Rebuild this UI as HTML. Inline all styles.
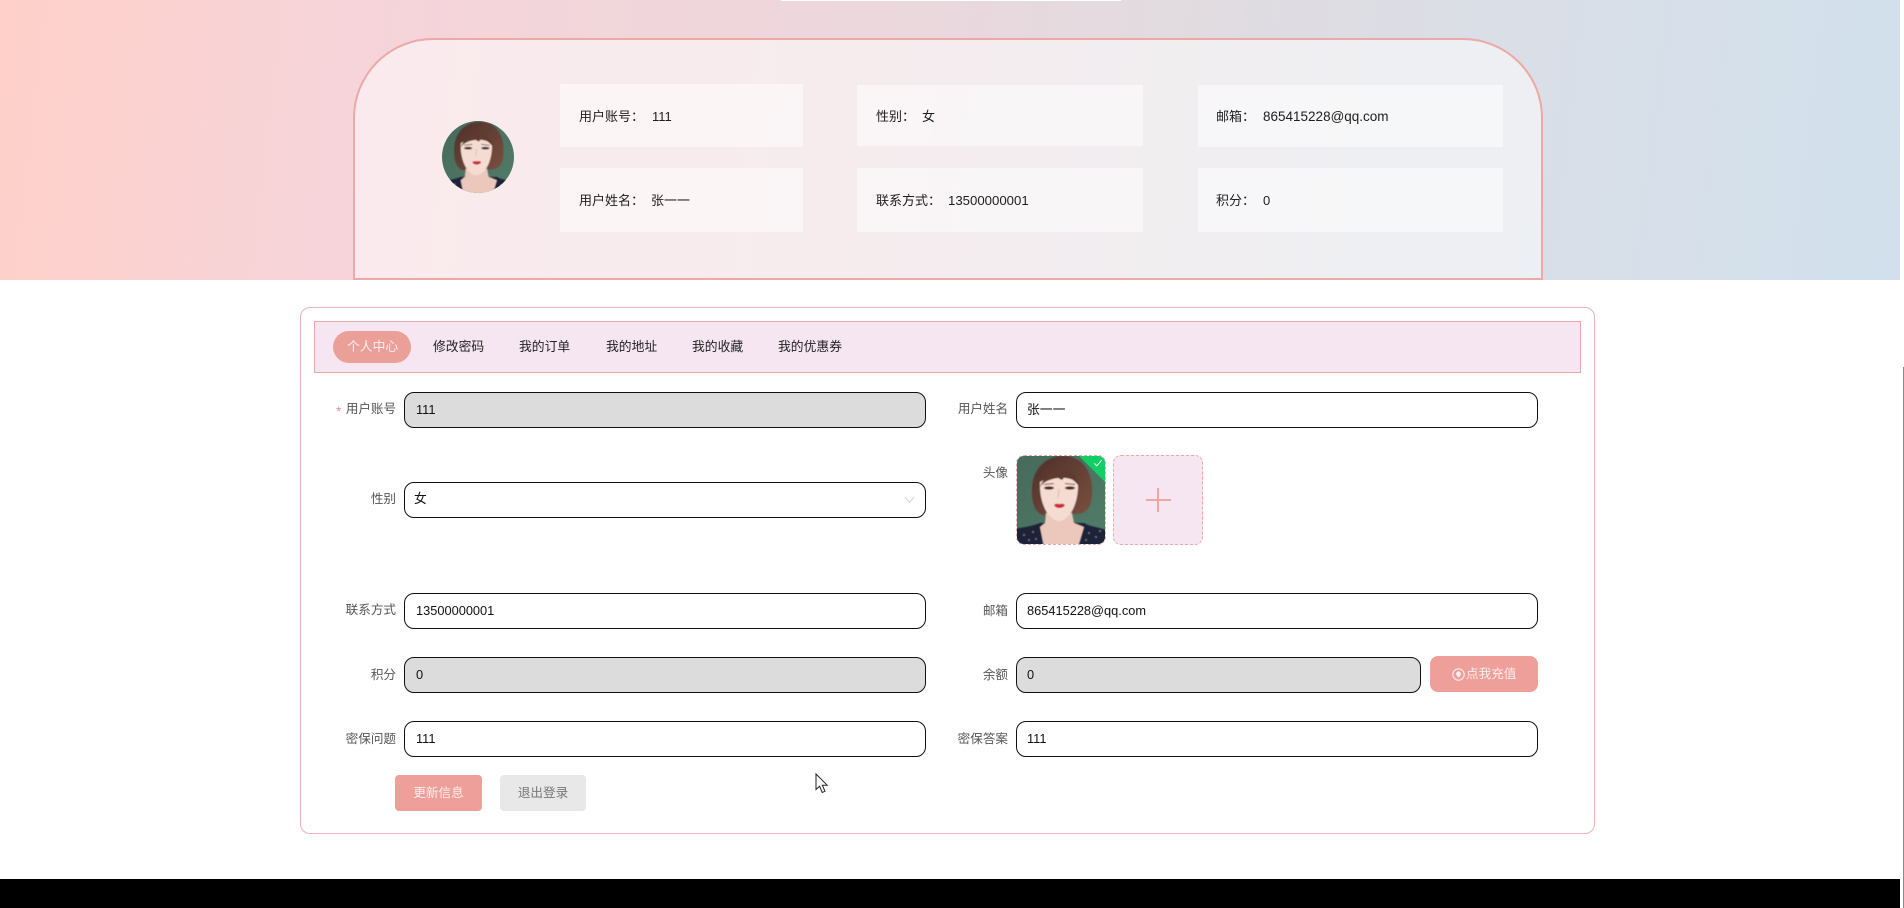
<!DOCTYPE html>
<html lang="zh">
<head>
<meta charset="utf-8">
<title>个人中心</title>
<style>
*{box-sizing:border-box}
html,body{margin:0;padding:0;width:1904px;height:908px;overflow:hidden;background:#fff;font-family:"Liberation Sans","Noto Sans CJK SC",sans-serif}
.a{position:absolute}
#hero{left:0;top:0;width:1900px;height:280px;background:linear-gradient(97deg,#ffd0c9 0%,#f6d4d9 18%,#ecd7dc 45%,#dfdce1 65%,#d7dfe9 85%,#d1e0ec 100%)}
#panel{left:353px;top:38px;width:1190px;height:242px;border:2px solid #eca9a5;border-radius:80px 80px 0 0;background:rgba(255,255,255,.52)}
.card{position:absolute;background:rgba(255,255,255,.48);height:63px}
.t{position:absolute;font-size:13px;line-height:20px;color:#1d1d1d;white-space:nowrap}
.lb{position:absolute;font-size:12.6px;line-height:20px;color:#555;text-align:right;white-space:nowrap}
.ip{position:absolute;height:36px;border:1px solid #111;border-radius:10px;background:#fff;font-size:12.8px;line-height:34px;padding-left:11px;color:#111;white-space:nowrap}
.ip.d{background:#dcdcdc}
.tab{position:absolute;top:337px;font-size:12.8px;line-height:20px;color:#222;white-space:nowrap}
.btn{position:absolute;height:36px;border-radius:4px;font-size:12.6px;line-height:36px;text-align:center}
</style>
</head>
<body>
<div id="hero" class="a"></div>
<div class="a" style="left:781px;top:0;width:340px;height:1px;background:#fff"></div>
<div id="panel" class="a"></div>

<svg width="0" height="0" style="position:absolute">
<defs>
<filter id="b" x="-5%" y="-5%" width="110%" height="110%"><feGaussianBlur stdDeviation=".65"/></filter>
<linearGradient id="bg" x1="0" y1="0" x2="1" y2="1"><stop offset="0" stop-color="#466a5b"/><stop offset="1" stop-color="#527c6a"/></linearGradient>
<linearGradient id="hr" x1="0" y1="0" x2="1" y2="1"><stop offset="0" stop-color="#4e2f28"/><stop offset="1" stop-color="#7a5040"/></linearGradient>
<symbol id="p" viewBox="0 0 90 90">
<rect width="90" height="90" fill="url(#bg)"/>
<g filter="url(#b)">
<path d="M16 38C15 14 30 1 47 1C66 1 77 16 76 38C76 50 72 58 62 59L27 60C20 58 16 50 16 38Z" fill="url(#hr)"/>
<path d="M-2 92L-2 74C8 72 14 72 24 68L68 68C74 72 84 72 92 76L92 92Z" fill="#1c2238"/>
<path d="M30 58L29 68L24 72L28 92L62 92L68 72L58 68L56 58Z" fill="#ecc8bc"/>
<path d="M24 27C23 46 31 65 43 66C55 65 63 46 62 27C52 21 33 21 24 27Z" fill="#f5dcd2"/>
<path d="M24 32C28 21 38 14 47 15C56 16 62 23 64 33C60 26 54 22 48 22C46 27 45 24 42 23C35 24 28 26 24 32Z" fill="#5e3a2e"/>
<ellipse cx="33" cy="33" rx="5" ry="1.6" fill="#3f2a26"/>
<ellipse cx="54" cy="33" rx="5" ry="1.6" fill="#3f2a26"/>
<path d="M28 29.5L38 28.5M49 28.5L59 29.5" stroke="#7b5344" stroke-width="1"/>
<path d="M43 34L42 43" stroke="#e4bcb0" stroke-width="1.2"/>
<path d="M38 50C40 48 42 49 43.5 49C45 49 47 48 49 50C47 54 40 54 38 50Z" fill="#cc2a3b"/>
<g fill="#8b7f95"><circle cx="8" cy="80" r=".9"/><circle cx="17" cy="77" r=".9"/><circle cx="13" cy="85" r=".9"/><circle cx="20" cy="84" r=".9"/><circle cx="73" cy="78" r=".9"/><circle cx="80" cy="82" r=".9"/><circle cx="70" cy="85" r=".9"/><circle cx="84" cy="76" r=".9"/></g>
</g>
</symbol>
</defs>
</svg>

<div class="a" style="left:442px;top:121px;width:72px;height:72px;border-radius:50%;overflow:hidden">
<svg width="74" height="74" style="position:absolute;left:-1px;top:0"><use href="#p"/></svg>
</div>

<div class="card" style="left:560px;top:84px;width:243px"></div>
<div class="card" style="left:857px;top:85px;width:286px;height:61px"></div>
<div class="card" style="left:1198px;top:85px;width:305px;height:62px"></div>
<div class="card" style="left:560px;top:168px;width:243px;height:64px"></div>
<div class="card" style="left:857px;top:168px;width:286px;height:64px"></div>
<div class="card" style="left:1198px;top:168px;width:305px;height:64px"></div>

<div class="t" style="left:579px;top:107px">用户账号：</div><div class="t" style="left:652px;top:107px">111</div>
<div class="t" style="left:876px;top:107px">性别：</div><div class="t" style="left:922px;top:107px">女</div>
<div class="t" style="left:1216px;top:107px">邮箱：</div><div class="t" style="left:1263px;top:107px;font-size:13.5px">865415228@qq.com</div>
<div class="t" style="left:579px;top:191px">用户姓名：</div><div class="t" style="left:651px;top:191px">张一一</div>
<div class="t" style="left:876px;top:191px">联系方式：</div><div class="t" style="left:948px;top:191px;font-size:13.2px">13500000001</div>
<div class="t" style="left:1216px;top:191px">积分：</div><div class="t" style="left:1263px;top:191px">0</div>

<div class="a" style="left:300px;top:307px;width:1295px;height:527px;border:1px solid #ecb4b2;border-radius:10px;background:#fff"></div>
<div class="a" style="left:314px;top:321px;width:1267px;height:52px;border:1px solid #e9aaa6;background:#f6e6f2"></div>
<div class="a" style="left:333px;top:331px;width:78px;height:32px;border-radius:16px;background:#eb9f99"></div>
<div class="tab" style="left:347px;color:#fbeeee">个人中心</div>
<div class="tab" style="left:433px">修改密码</div>
<div class="tab" style="left:519px">我的订单</div>
<div class="tab" style="left:606px">我的地址</div>
<div class="tab" style="left:692px">我的收藏</div>
<div class="tab" style="left:778px">我的优惠券</div>

<div class="a" style="left:336px;top:401px;font-size:14px;line-height:20px;color:#e98f8c">*</div>
<div class="lb" style="right:1508px;top:399px;width:60px;letter-spacing:-.05px">用户账号</div>
<div class="ip d" style="left:404px;top:392px;width:522px">111</div>
<div class="lb" style="right:896px;top:399px;width:60px;letter-spacing:-.05px">用户姓名</div>
<div class="ip" style="left:1016px;top:392px;width:522px;padding-left:10px">张一一</div>

<div class="lb" style="right:1508px;top:489px">性别</div>
<div class="ip" style="left:404px;top:482px;width:522px;padding-left:9px;line-height:32px">女</div>
<svg class="a" style="left:904px;top:496px" width="11" height="8" viewBox="0 0 11 8"><path d="M1 1L5.5 6.5L10 1" fill="none" stroke="#d4d4d4" stroke-width="1"/></svg>

<div class="lb" style="right:896px;top:463px">头像</div>
<div class="a" style="left:1016px;top:455px;width:90px;height:90px;border:1px dashed #e9a9a5;border-radius:8px;overflow:hidden">
<svg width="90" height="90" style="position:absolute;left:-1px;top:-1px"><use href="#p"/></svg>
<div class="a" style="right:-17px;top:-9px;width:46px;height:24px;background:#13ce66;transform:rotate(45deg)"></div>
<svg class="a" style="right:2px;top:3px" width="10" height="8" viewBox="0 0 12 10"><path d="M1.5 5.5L4.5 8.5L10.5 1.5" fill="none" stroke="#fff" stroke-width="1.2"/></svg>
</div>
<div class="a" style="left:1113px;top:455px;width:90px;height:90px;border:1px dashed #e9a9a5;border-radius:8px;background:#f6e6f2"></div>
<div class="a" style="left:1146px;top:499px;width:25px;height:2px;background:#eba8a4"></div>
<div class="a" style="left:1157px;top:488px;width:2px;height:24px;background:#eba8a4"></div>

<div class="lb" style="right:1508px;top:600px">联系方式</div>
<div class="ip" style="left:404px;top:593px;width:522px">13500000001</div>
<div class="lb" style="right:896px;top:601px">邮箱</div>
<div class="ip" style="left:1016px;top:593px;width:522px;padding-left:10px">865415228@qq.com</div>

<div class="lb" style="right:1508px;top:665px">积分</div>
<div class="ip d" style="left:404px;top:657px;width:522px">0</div>
<div class="lb" style="right:896px;top:665px">余额</div>
<div class="ip d" style="left:1016px;top:657px;width:405px;padding-left:10px">0</div>
<div class="btn" style="left:1430px;top:656px;width:108px;background:#ee9f9a;border-radius:8px"></div>
<svg class="a" style="left:1452px;top:668px" width="13" height="13" viewBox="0 0 13 13"><circle cx="6.5" cy="6.5" r="5.7" fill="none" stroke="#fbeeee" stroke-width="1.1"/><circle cx="6.5" cy="5.8" r="2.4" fill="#fbeeee"/><path d="M4.8 7.5H8.2L6.5 10Z" fill="#fbeeee"/></svg>
<div class="t" style="left:1466px;top:664px;color:#fbeeee;font-size:12.6px">点我充值</div>

<div class="lb" style="right:1508px;top:729px">密保问题</div>
<div class="ip" style="left:404px;top:721px;width:522px">111</div>
<div class="lb" style="right:896px;top:729px">密保答案</div>
<div class="ip" style="left:1016px;top:721px;width:522px;padding-left:10px">111</div>

<div class="btn" style="left:395px;top:775px;width:87px;background:#ee9f9a;color:#fbeeee">更新信息</div>
<div class="btn" style="left:500px;top:775px;width:86px;background:#e8e8e8;color:#777">退出登录</div>

<svg class="a" style="left:815px;top:773px" width="14" height="21" viewBox="0 0 14 21"><path d="M1 1V16.5L4.6 13.2L7.2 19.5L10 18.3L7.3 12.2H12.2Z" fill="#fff" stroke="#222" stroke-width="1"/></svg>

<div class="a" style="left:0;top:879px;width:1900px;height:29px;background:#000"></div>
<div class="a" style="left:1903px;top:367px;width:1px;height:541px;background:#8a8a8a"></div>
</body>
</html>
